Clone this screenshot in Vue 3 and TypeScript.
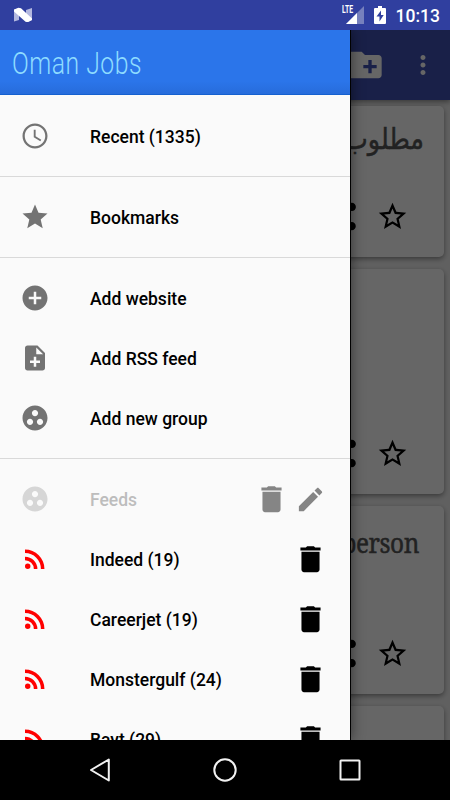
<script setup lang="ts">
interface Entry {
  label: string
  icon: string
}

const icons: Record<string, string> = {
  clock:
    'M11.99 2C6.47 2 2 6.48 2 12s4.47 10 9.99 10C17.52 22 22 17.52 22 12S17.52 2 11.99 2zM12 20.2c-4.53 0-8.2-3.67-8.2-8.2S7.47 3.8 12 3.8s8.2 3.67 8.2 8.2-3.67 8.2-8.2 8.2zM12.5 7H11v6l5.25 3.15.75-1.23-4.5-2.67z',
  star: 'M12 17.27L18.18 21l-1.64-7.03L22 9.24l-7.19-.61L12 2 9.19 8.63 2 9.24l5.46 4.73L5.82 21z',
  starOutline:
    'M22 9.24l-7.19-.62L12 2 9.19 8.63 2 9.24l5.46 4.73L5.82 21 12 17.27 18.18 21l-1.63-7.03L22 9.24zM12 15.4l-3.76 2.27 1-4.28-3.32-2.88 4.38-.38L12 6.1l1.71 4.04 4.38.38-3.32 2.88 1 4.28L12 15.4z',
  addCircle:
    'M12 2C6.48 2 2 6.48 2 12s4.48 10 10 10 10-4.48 10-10S17.52 2 12 2zm5 11h-4v4h-2v-4H7v-2h4V7h2v4h4v2z',
  noteAdd:
    'M14 2H6c-1.1 0-1.99.9-1.99 2L4 20c0 1.1.89 2 1.99 2H18c1.1 0 2-.9 2-2V8l-6-6zm2 14h-3v3h-2v-3H8v-2h3v-3h2v3h3v2zm-3-7V3.5L18.5 9H13z',
  group:
    'M12 2C6.48 2 2 6.48 2 12s4.48 10 10 10 10-4.48 10-10S17.52 2 12 2zM8 17.5c-1.38 0-2.5-1.12-2.5-2.5s1.12-2.5 2.5-2.5 2.5 1.12 2.5 2.5-1.12 2.5-2.5 2.5zM9.5 8c0-1.38 1.12-2.5 2.5-2.5s2.5 1.12 2.5 2.5-1.12 2.5-2.5 2.5S9.5 9.38 9.5 8zm6.5 9.5c-1.38 0-2.5-1.12-2.5-2.5s1.12-2.5 2.5-2.5 2.5 1.12 2.5 2.5-1.12 2.5-2.5 2.5z',
  rss: 'M6.18 15.64a2.18 2.18 0 1 1 0 4.36 2.18 2.18 0 0 1 0-4.36M4 4.44A15.56 15.56 0 0 1 19.56 20h-2.83A12.73 12.73 0 0 0 4 7.27V4.44m0 5.66a9.9 9.9 0 0 1 9.9 9.9h-2.83A7.07 7.07 0 0 0 4 12.93V10.1z',
  trash:
    'M5 6h14v13.800c0 1.200-.8 2-2 2H7c-1.200 0-2-.8-2-2zM4.200 2.700h4.200l1-1h5.200l1 1h4.200v2.300H4.200z',
  pencil:
    'M3 17.25V21h3.75L17.81 9.94l-3.75-3.75L3 17.25zM20.71 7.04c.39-.39.39-1.02 0-1.41l-2.34-2.34c-.39-.39-1.02-.39-1.41 0l-1.83 1.83 3.75 3.75 1.83-1.83z',
  share:
    'M18 16.080c-.76 0-1.440.3-1.960.770L8.910 12.700c.05-.23.09-.46.09-.7s-.04-.47-.09-.7l7.050-4.110c.54.5 1.250.81 2.040.81 1.660 0 3-1.340 3-3s-1.340-3-3-3-3 1.340-3 3c0 .24.04.47.09.7L8.040 9.810C7.500 9.310 6.790 9 6 9c-1.660 0-3 1.340-3 3s1.340 3 3 3c.79 0 1.500-.31 2.040-.81l7.120 4.160c-.05.21-.08.43-.08.65 0 1.610 1.310 2.920 2.920 2.920s2.920-1.310 2.920-2.920-1.310-2.920-2.920-2.920z',
  folderAdd:
    'M20 6h-8l-2-2H4c-1.110 0-1.990.89-1.990 2L2 18c0 1.110.89 2 2 2h16c1.110 0 2-.89 2-2V8c0-1.110-.89-2-2-2zm-1 8h-3v3h-2v-3h-3v-2h3V9h2v3h3v2z',
  more: 'M12 8c1.100 0 2-.9 2-2s-.9-2-2-2-2 .9-2 2 .9 2 2 2zm0 2c-1.100 0-2 .9-2 2s.9 2 2 2 2-.9 2-2-.9-2-2-2zm0 6c-1.100 0-2 .9-2 2s.9 2 2 2 2-.9 2-2-.9-2-2-2z',
}

const sections: Entry[][] = [
  [{ label: 'Recent (1335)', icon: 'clock' }],
  [{ label: 'Bookmarks', icon: 'star' }],
  [
    { label: 'Add website', icon: 'addCircle' },
    { label: 'Add RSS feed', icon: 'noteAdd' },
    { label: 'Add new group', icon: 'group' },
  ],
]

const feeds: string[] = ['Indeed (19)', 'Careerjet (19)', 'Monstergulf (24)', 'Bayt (29)']

const cards = [
  { title: 'مطلوب', size: 'short', rtl: true },
  { title: '', size: 'tall', rtl: false },
  { title: 'person', size: 'medium', rtl: false },
  { title: '', size: 'short', rtl: false },
]
</script>

<template>
  <div class="screen">
    <header class="status">
      <svg class="n-logo" viewBox="0 0 20 16">
        <path d="M1 3l5-2v12l-5 1.500zM13 3l6-2v12l-4 2h-2z" fill="#b3b8df" />
        <path d="M1 2.500L5.500 .8 8 1.200l11 10.300v1.500l-4 2.100-2.500-.4L1 4.500z" fill="#fff" />
      </svg>
      <div class="status-right">
        <span class="lte">LTE</span>
        <svg class="signal" viewBox="0 0 18 18">
          <path d="M18 0v18H0z" fill="#7680bd" />
          <path d="M11 7v11H0z" fill="#fff" />
        </svg>
        <svg class="battery" viewBox="0 0 12 18">
          <path d="M4 0h4v2h3q1 0 1 1v14q0 1-1 1H1q-1 0-1-1V3q0-1 1-1h3z" fill="#fff" />
          <path d="M7 4.500L2.500 10.500h3v5L9.700 9H7z" fill="#303f9f" />
        </svg>
        <span class="time">10:13</span>
      </div>
    </header>

    <main class="stage">
      <section class="page">
        <div class="toolbar">
          <svg class="folder" viewBox="0 0 24 24"><path :d="icons.folderAdd" /></svg>
          <svg class="more" viewBox="0 0 24 24"><path :d="icons.more" /></svg>
        </div>
        <div class="cards">
          <article v-for="(card, i) in cards" :key="i" class="card" :class="card.size">
            <h2 :class="{ arabic: card.rtl }" :dir="card.rtl ? 'rtl' : 'ltr'">{{ card.title }}</h2>
            <div class="actions">
              <svg viewBox="0 0 24 24"><path :d="icons.share" /></svg>
              <svg viewBox="0 0 24 24"><path :d="icons.starOutline" /></svg>
            </div>
          </article>
        </div>
      </section>
      <div class="scrim"></div>

      <aside class="drawer">
        <div class="brand"><h1>Oman Jobs</h1></div>
        <ul v-for="(section, i) in sections" :key="i" class="section">
          <li v-for="entry in section" :key="entry.label" class="row">
            <svg class="lead" viewBox="0 0 24 24"><path :d="icons[entry.icon]" /></svg>
            <span class="label">{{ entry.label }}</span>
          </li>
        </ul>
        <ul class="section">
          <li class="row muted">
            <svg class="lead" viewBox="0 0 24 24"><path :d="icons.group" /></svg>
            <span class="label">Feeds</span>
            <svg class="tool" viewBox="0 0 24 24"><path :d="icons.trash" /></svg>
            <svg class="tool" viewBox="0 0 24 24"><path :d="icons.pencil" /></svg>
          </li>
          <li v-for="feed in feeds" :key="feed" class="row feed">
            <svg class="lead" viewBox="0 0 24 24"><path :d="icons.rss" /></svg>
            <span class="label">{{ feed }}</span>
            <svg class="tool" viewBox="0 0 24 24"><path :d="icons.trash" /></svg>
          </li>
        </ul>
      </aside>
    </main>

    <nav class="navbar">
      <svg viewBox="0 0 30 30"><path d="M23.800 4.500v21L6 15z" /></svg>
      <svg viewBox="0 0 30 30"><circle cx="15" cy="15" r="10.700" /></svg>
      <svg viewBox="0 0 30 30"><rect x="5.500" y="5.500" width="19" height="19" rx=".5" /></svg>
    </nav>
  </div>
</template>

<style>
body {
  margin: 0;
  overflow: hidden;
}
</style>

<style scoped>
.screen {
  width: 450px;
  height: 800px;
  display: flex;
  flex-direction: column;
  overflow: hidden;
  font-family: Roboto, 'Liberation Sans', sans-serif;
}
svg {
  display: block;
  flex: none;
}
.status {
  height: 30px;
  flex: none;
  display: flex;
  align-items: center;
  justify-content: space-between;
  padding: 0 10px 0 13px;
  background: #303f9f;
  color: #fff;
}
.n-logo {
  width: 20px;
  height: 16px;
}
.status-right {
  display: flex;
  align-items: center;
}
.lte {
  align-self: flex-start;
  padding-top: 4px;
  font-size: 11px;
  line-height: 11px;
  font-weight: 700;
  width: 12px;
  margin-right: -8px;
  transform: scaleX(0.62);
  transform-origin: left;
}
.signal {
  width: 18px;
  height: 18px;
  margin-right: 10px;
}
.battery {
  width: 12px;
  height: 18px;
  margin-right: 10px;
}
.time {
  font-size: 17.5px;
  font-weight: 500;
  line-height: 30px;
  padding-top: 1px;
}
.stage {
  position: relative;
  height: 710px;
  flex: none;
  overflow: hidden;
}
.page {
  height: 710px;
  background: #f0f0f0;
  overflow: hidden;
}
.toolbar {
  height: 70px;
  display: flex;
  align-items: center;
  justify-content: flex-end;
  gap: 23px;
  padding-right: 12px;
  box-sizing: border-box;
  background: #3f51b5;
  box-shadow: 0 2px 5px rgba(0, 0, 0, 0.4);
}
.folder {
  width: 40px;
  height: 40px;
  fill: #fff;
}
.more {
  width: 30px;
  height: 30px;
  fill: #fff;
}
.cards {
  display: flex;
  flex-direction: column;
  gap: 12px;
  padding: 6px 6px 0;
}
.card {
  flex: none;
  display: flex;
  flex-direction: column;
  justify-content: space-between;
  box-sizing: border-box;
  padding: 14px 20px 24px;
  background: #fff;
  border-radius: 5px;
  box-shadow: 0 2px 5px rgba(0, 0, 0, 0.4);
}
.short {
  height: 151px;
}
.tall {
  height: 225px;
}
.medium {
  height: 188px;
}
.card h2 {
  margin: 0;
  min-height: 44px;
  padding-right: 5px;
  font: 400 28px/44px 'Noto Serif', 'DejaVu Serif Condensed', 'DejaVu Serif', serif;
  letter-spacing: -0.5px;
  text-align: right;
  color: #555;
  -webkit-text-stroke: 0.5px #555;
  transform: scaleX(0.87);
  transform-origin: calc(100% - 5px) 50%;
}
.card h2.arabic {
  padding-right: 0;
  text-align: start;
  font-family: 'DejaVu Sans', sans-serif;
  font-size: 29px;
  line-height: 39px;
  letter-spacing: 0;
  transform: scaleX(0.88);
  transform-origin: right;
}
.actions {
  display: flex;
  justify-content: flex-end;
  gap: 16px;
  margin-right: -20px;
  padding-right: 35.5px;
}
.actions svg {
  width: 33px;
  height: 33px;
}
.scrim {
  position: absolute;
  inset: 0;
  background: rgba(0, 0, 0, 0.6);
}
.drawer {
  position: absolute;
  top: 0;
  left: 0;
  width: 350px;
  height: 710px;
  overflow: hidden;
  background: #fafafa;
  box-shadow: 0 0 0 1px #000, 2px 0 12px rgba(0, 0, 0, 0.45);
}
.brand {
  height: 65px;
  margin-bottom: 1px;
  box-sizing: border-box;
  padding-left: 12px;
  border-bottom: 1px solid #1560cf;
  background: linear-gradient(#2b75ea 80%, #276cdb);
}
.brand h1 {
  margin: 0;
  font-size: 31px;
  line-height: 67px;
  font-weight: 300;
  color: #8edcff;
  white-space: nowrap;
  letter-spacing: 0.6px;
  transform: scaleX(0.8);
  transform-origin: left;
}
.section {
  margin: 0;
  padding: 10px 0;
  list-style: none;
  border-bottom: 1px solid #d9d9d9;
}
.row {
  height: 60px;
  display: flex;
  align-items: center;
  padding: 0 24px 0 20px;
  box-sizing: border-box;
}
.lead {
  width: 30px;
  height: 30px;
  margin-right: 40px;
  fill: #737373;
}
.label {
  flex: 1;
  padding-top: 1px;
  font-size: 17.5px;
  font-weight: 500;
  color: #000;
  white-space: nowrap;
}
.tool {
  width: 31px;
  height: 31px;
  margin-left: 8px;
}
.muted .lead {
  fill: #d6d6d6;
}
.muted .label {
  color: #bdbdbd;
}
.muted .tool {
  fill: #858585;
}
.feed .lead {
  fill: #f00;
}
.navbar {
  height: 60px;
  flex: none;
  display: flex;
  align-items: center;
  justify-content: center;
  gap: 95px;
  background: #000;
}
.navbar svg {
  width: 30px;
  height: 30px;
  fill: none;
  stroke: #f2f2f2;
  stroke-width: 2;
  stroke-linejoin: round;
}
</style>
